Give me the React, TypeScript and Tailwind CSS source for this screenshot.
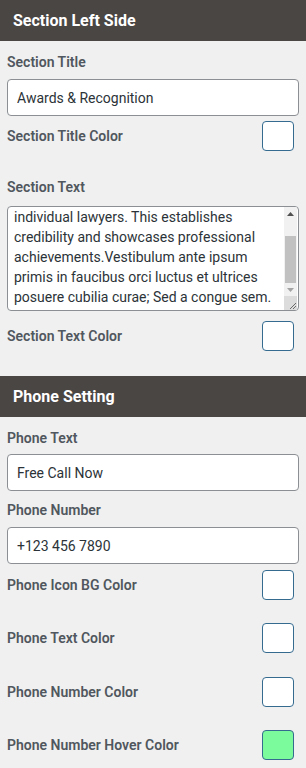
import React from 'react';

const font = { fontFamily: 'Roboto, "Liberation Sans", sans-serif' };

const SectionHeader = ({ title }: { title: string }) => (
  <div className="h-[41px] bg-[#4a4644] px-[13px] flex items-center text-white text-[16px] font-bold">
    {title}
  </div>
);

const Label = ({ children, className = '' }: { children: React.ReactNode; className?: string }) => (
  <div className={`text-[14px] leading-[20px] font-semibold text-[#50575e] ${className}`}>{children}</div>
);

const TextInput = ({ value, className = '' }: { value: string; className?: string }) => (
  <input
    readOnly
    value={value}
    className={`block w-full h-[37px] rounded-[4px] border border-[#8c8f94] bg-white px-[9px] text-[14px] text-[#2c3338] outline-none ${className}`}
    style={font}
  />
);

const ColorRow = ({ label, color = '#ffffff', className = '' }: { label: string; color?: string; className?: string }) => (
  <div className={`flex items-center justify-between pr-[5px] ${className}`}>
    <Label>{label}</Label>
    <div className="w-[32px] h-[30px] rounded-[4px] border border-[#356b8f]" style={{ backgroundColor: color }} />
  </div>
);

const textLines = [
  'individual lawyers. This establishes',
  'credibility and showcases professional',
  'achievements.Vestibulum ante ipsum',
  'primis in faucibus orci luctus et ultrices',
  'posuere cubilia curae; Sed a congue sem.',
];

// textarea scrolled to the bottom, with the classic scrollbar drawn by hand
const ScrolledTextArea = ({ className = '' }: { className?: string }) => (
  <div className={`flex h-[105px] rounded-[4px] border border-[#8c8f94] bg-white overflow-hidden ${className}`}>
    <div className="flex-1 pl-[6px] text-[14px] leading-[20px] text-[#2c3338] whitespace-nowrap overflow-hidden">
      {textLines.map((l) => (
        <div key={l}>{l}</div>
      ))}
    </div>
    <div className="w-[13px] mr-[1px] flex flex-col bg-[#f1f1f1]">
      <div className="h-[14px] flex items-center justify-center">
        <svg width="7" height="4" viewBox="0 0 7 4">
          <path d="M0 4 L3.5 0 L7 4 Z" fill="#505050" />
        </svg>
      </div>
      <div className="flex-1 flex flex-col px-[1px] pt-[15px] pb-[1px]">
        <div className="flex-1 bg-[#c1c1c1]" />
      </div>
      <div className="h-[12px] flex items-center justify-center">
        <svg width="7" height="4" viewBox="0 0 7 4">
          <path d="M0 0 L3.5 4 L7 0 Z" fill="#a3a3a3" />
        </svg>
      </div>
      <div className="h-[14px] bg-[#dcdcdc] flex items-end justify-end">
        <svg width="10" height="10" viewBox="0 0 10 10">
          <path d="M9 3 L3 9 M9 6 L6 9" stroke="#6b6b6b" strokeWidth="1" />
        </svg>
      </div>
    </div>
  </div>
);

export default function App() {
  return (
    <div className="w-[306px] min-h-[768px] bg-[#f0f0f0]" style={font}>
      <SectionHeader title="Section Left Side" />
      <div className="px-[7px] pb-[25px]">
        <Label className="pt-[11px]">Section Title</Label>
        <TextInput value="Awards & Recognition" className="mt-[7px]" />
        <ColorRow label="Section Title Color" className="mt-[5px]" />
        <Label className="mt-[26px]">Section Text</Label>
        <ScrolledTextArea className="mt-[9px]" />
        <ColorRow label="Section Text Color" className="mt-[10px]" />
      </div>
      <SectionHeader title="Phone Setting" />
      <div className="px-[7px] pb-[6px]">
        <Label className="pt-[11px]">Phone Text</Label>
        <TextInput value="Free Call Now" className="mt-[6px]" />
        <Label className="mt-[9px]">Phone Number</Label>
        <TextInput value="+123 456 7890" className="mt-[7px]" />
        <ColorRow label="Phone Icon BG Color" className="mt-[6px]" />
        <ColorRow label="Phone Text Color" className="mt-[23px]" />
        <ColorRow label="Phone Number Color" className="mt-[24px]" />
        <ColorRow label="Phone Number Hover Color" color="#7bfb9b" className="mt-[23px]" />
      </div>
    </div>
  );
}
